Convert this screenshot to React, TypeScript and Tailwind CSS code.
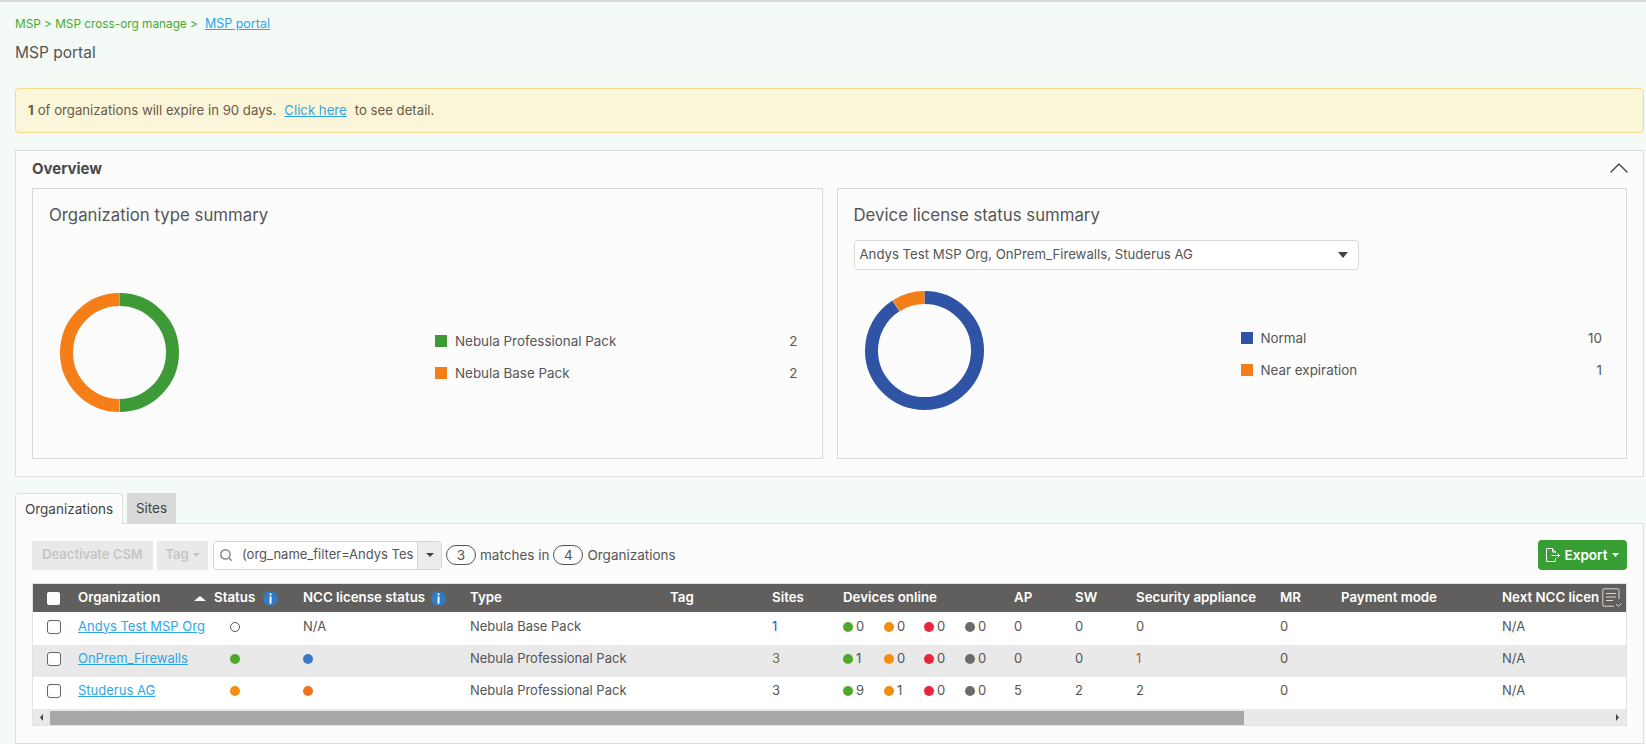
import React from 'react';
import { Search, ChevronUp } from 'lucide-react';

const COLS = 'grid grid-cols-[45px_136px_89px_167px_200px_102px_71px_171px_61px_61px_144px_61px_161px_125px]';

const green = '#4fa82e';
const amber = '#f28f12';
const red = '#e8253c';
const gray = '#6b6b6b';

const rows = [
    { name: 'Andys Test MSP Org', status: 'empty', ncc: '', type: 'Nebula Base Pack', sites: '1', sitesColor: 'text-[#2a5ea8]', dev: ['0', '0', '0', '0'], ap: '0', sw: '0', sec: '0', secOrange: false },
    { name: 'OnPrem_Firewalls', status: green, ncc: '#3a78c2', type: 'Nebula Professional Pack', sites: '3', sitesColor: 'text-[#7a6a4a]', dev: ['1', '0', '0', '0'], ap: '0', sw: '0', sec: '1', secOrange: true },
    { name: 'Studerus AG', status: amber, ncc: '#f0741f', type: 'Nebula Professional Pack', sites: '3', sitesColor: 'text-[#555]', dev: ['9', '1', '0', '0'], ap: '5', sw: '2', sec: '2', secOrange: false },
];

function Caret({ className }: { className?: string }) {
    return (
        <svg viewBox="0 0 8 5" className={className} fill="currentColor" preserveAspectRatio="none">
            <path d="M0 0h8L4 5z" />
        </svg>
    );
}

function Info() {
    return (
        <svg viewBox="0 0 15 15" className="h-[15px] w-[15px] shrink-0">
            <circle cx="7.5" cy="7.5" r="7.5" fill="#2f7cc4" />
            <rect x="6.6" y="2.4" width="1.9" height="1.9" fill="#fff" />
            <rect x="6.6" y="5.4" width="1.9" height="7.2" fill="#fff" />
        </svg>
    );
}

function Dot({ color }: { color: string }) {
    return <span className="h-2.5 w-2.5 shrink-0 rounded-full" style={{ backgroundColor: color }} />;
}

function Donut({ segments }: { segments: { color: string; value: number }[] }) {
    const r = 53;
    const c = 2 * Math.PI * r;
    const total = segments.reduce((a, s) => a + s.value, 0);
    let offset = 0;
    return (
        <svg viewBox="0 0 119 119" className="h-[119px] w-[119px] -rotate-90">
            {segments.map((s) => {
                const len = (s.value / total) * c;
                const el = (
                    <circle
                        key={s.color}
                        cx="59.5"
                        cy="59.5"
                        r={r}
                        fill="none"
                        stroke={s.color}
                        strokeWidth="13"
                        strokeDasharray={`${len - 0.4} ${c - len + 0.4}`}
                        strokeDashoffset={-offset}
                    />
                );
                offset += len;
                return el;
            })}
        </svg>
    );
}

function Legend({ color, label, value }: { color: string; label: string; value: string }) {
    return (
        <div className="flex h-[32px] items-center text-[13.4px] text-[#555]">
            <span className="mr-2 h-3 w-3" style={{ backgroundColor: color }} />
            <span className="flex-1">{label}</span>
            <span>{value}</span>
        </div>
    );
}

export default function App() {
    return (
        <div className="h-[744px] w-[1646px] overflow-hidden border-t-2 border-[#d8d8d8] bg-[#f4faf6] pl-[15px] pr-[2px] font-['Inter',sans-serif] text-[#555]">
            <div className="flex h-[41px] items-end pb-[11px] text-[11.8px] leading-4">
                <span className="text-[#45ab2e]">MSP &gt; MSP cross-org manage &gt;</span>
                <a className="ml-[7px] text-[12.5px] text-[#2ea6e8] underline">MSP portal</a>
            </div>
            <h1 className="text-[15.5px] leading-5 text-[#555]">MSP portal</h1>

            <div className="mt-[25px] flex h-[45px] items-center rounded-sm border border-[#f3dc8d] bg-[#fbf6d9] pl-3 text-[13.2px] text-[#6b5a46]">
                <b className="font-bold">1</b>
                <span className="ml-1">of organizations will expire in 90 days.</span>
                <a className="ml-2 text-[#2ea6e8] underline">Click here</a>
                <span className="ml-2">to see detail.</span>
            </div>

            <section className="mt-[17px] h-[327px] border border-[#dedede] bg-[#fcfcfc] px-4">
                <div className="flex h-[37px] items-center justify-between">
                    <h2 className="text-[15px] font-bold text-[#4a4a4a]">Overview</h2>
                    <ChevronUp className="-mr-2 -mt-1 h-8 w-8 text-[#444]" strokeWidth={1} />
                </div>
                <div className="flex gap-[14px]">
                    <div className="h-[271px] w-[791px] border border-[#d9d9d9] px-4">
                        <h3 className="mt-[16px] text-[16.8px] leading-5 text-[#555]">Organization type summary</h3>
                        <div className="mt-[68px] flex items-center">
                            <div className="ml-[11px]">
                                <Donut segments={[{ color: '#3d9a36', value: 2 }, { color: '#f47e17', value: 2 }]} />
                            </div>
                            <div className="ml-[256px] mt-[9px] flex-1 pr-[8px]">
                                <Legend color="#3d9a36" label="Nebula Professional Pack" value="2" />
                                <Legend color="#f47e17" label="Nebula Base Pack" value="2" />
                            </div>
                        </div>
                    </div>
                    <div className="h-[271px] w-[791px] border border-[#d9d9d9] px-4">
                        <h3 className="mt-[16px] text-[16.8px] leading-5 text-[#555]">Device license status summary</h3>
                        <div className="mt-[15px] flex h-[30px] w-[505px] items-center justify-between rounded-sm border border-[#d9d9d9] bg-white pl-[5px] pr-[10px] text-[13.2px]">
                            <span>Andys Test MSP Org, OnPrem_Firewalls, Studerus AG</span>
                            <Caret className="h-[6px] w-[10px] text-[#444]" />
                        </div>
                        <div className="mt-[21px] flex items-center">
                            <div className="ml-[11px]">
                                <Donut segments={[{ color: '#2f53a5', value: 10 }, { color: '#f47e17', value: 1 }]} />
                            </div>
                            <div className="ml-[257px] mt-[7px] flex-1 pr-[8px]">
                                <Legend color="#2f53a5" label="Normal" value="10" />
                                <Legend color="#f47e17" label="Near expiration" value="1" />
                            </div>
                        </div>
                    </div>
                </div>
            </section>

            <div className="mt-[16px] flex h-[30px] items-end gap-1">
                <div className="relative z-10 mb-[-1px] flex h-[31px] w-[108px] items-center justify-center rounded-t-sm border border-b-0 border-[#dedede] bg-[#fcfcfc] text-[13.5px] text-[#444]">
                    Organizations
                </div>
                <div className="mb-[-1px] flex h-[31px] w-[49px] items-center justify-center bg-[#d9d9d9] text-[13.5px] text-[#444]">
                    Sites
                </div>
            </div>
            <section className="h-[221px] border border-[#dedede] bg-[#fcfcfc] px-4 pt-[16px]">
                <div className="flex h-[30px] items-center">
                    <button className="h-[29px] w-[121px] bg-[#e9e9e9] text-[13px] font-semibold text-[#c6c6c6]">Deactivate CSM</button>
                    <button className="ml-[4px] flex h-[29px] w-[51px] items-center justify-center gap-1 bg-[#e9e9e9] text-[13px] font-semibold text-[#c6c6c6]">
                        Tag <Caret className="h-[4px] w-[7px]" />
                    </button>
                    <div className="ml-[5px] flex h-[29px] w-[229px] items-center rounded-sm border border-[#d4d4d4] bg-white">
                        <Search className="ml-[5px] h-[14px] w-[14px] shrink-0 text-[#888]" strokeWidth={2.5} />
                        <span className="ml-[9px] w-[171px] whitespace-nowrap text-[13px]">(org_name_filter=Andys Tes</span>
                        <span className="ml-auto flex h-full w-[24px] items-center justify-center border-l border-[#d4d4d4] bg-[#ececec]">
                            <Caret className="h-[4px] w-[8px] text-[#444]" />
                        </span>
                    </div>
                    <span className="ml-[4px] flex h-5 w-[30px] items-center justify-center rounded-full border border-[#555] text-[13.5px]">3</span>
                    <span className="ml-[4px] text-[13.5px]">matches in</span>
                    <span className="ml-[4px] flex h-5 w-[30px] items-center justify-center rounded-full border border-[#555] text-[13.5px]">4</span>
                    <span className="ml-[4px] text-[13.5px]">Organizations</span>
                    <button className="ml-auto flex h-[30px] w-[89px] items-center justify-center gap-[5px] rounded-sm bg-[#379e34] text-[13.5px] font-semibold text-white">
                        <svg viewBox="0 0 14 14" className="h-[14px] w-[14px]" fill="none" stroke="currentColor" strokeWidth="1">
                            <path d="M9.5 5V4L6.5.5H1a.5.5 0 0 0-.5.5v12a.5.5 0 0 0 .5.5h8a.5.5 0 0 0 .5-.5v-2.5M6.5.5V4h3M5.5 7.5h8m-2-2 2 2-2 2" />
                        </svg>
                        Export
                        <Caret className="h-[4px] w-[7px]" />
                    </button>
                </div>

                <div className="mt-[13px] border border-[#e2e2e2]">
                    <div className={`${COLS} relative h-[28px] items-center bg-[#615f5d] text-[13.3px] font-semibold text-white`}>
                        <span className="ml-[14px] h-[13px] w-[13px] rounded-[2px] bg-white" />
                        <span className="flex items-center justify-between pr-[8px]">
                            Organization
                            <Caret className="h-[5px] w-[12px] rotate-180" />
                        </span>
                        <span className="flex items-center gap-[8px]">Status <Info /></span>
                        <span className="flex items-center gap-[6px]">NCC license status <Info /></span>
                        <span>Type</span>
                        <span>Tag</span>
                        <span>Sites</span>
                        <span>Devices online</span>
                        <span>AP</span>
                        <span>SW</span>
                        <span>Security appliance</span>
                        <span>MR</span>
                        <span>Payment mode</span>
                        <span className="whitespace-nowrap">Next NCC licen</span>
                        <svg viewBox="0 0 20 20" className="absolute right-[4px] top-[4px] h-[20px] w-[20px]" fill="none" stroke="#d8d8d8" strokeWidth="1">
                            <path d="M17 11V2a1.2 1.2 0 0 0-1.2-1.2H2A1.2 1.2 0 0 0 .8 2v15A1.2 1.2 0 0 0 2 18.2h10M4 5.5h10M4 9h10M4 12.5h7M14 16l2.4 2.4 3-3" />
                        </svg>
                    </div>
                    {rows.map((r, i) => (
                        <div key={r.name} className={`${COLS} items-center pb-[4px] text-[13px] ${i === 0 ? 'h-[33px]' : 'h-[32px]'} ${i === 1 ? 'bg-[#e9e9e9]' : 'bg-white'}`}>
                            <span className="ml-[14px] h-[14px] w-[14px] rounded-[3px] border border-[#666] bg-white" />
                            <a className="overflow-hidden whitespace-nowrap text-[#2ea6e8] underline">{r.name}</a>
                            <span className="pl-[16px]">
                                {r.status === 'empty' ? (
                                    <span className="block h-2.5 w-2.5 rounded-full border border-[#555]" />
                                ) : (
                                    <span className="block h-2.5 w-2.5 rounded-full" style={{ backgroundColor: r.status }} />
                                )}
                            </span>
                            <span>
                                {r.ncc ? <span className="block h-2.5 w-2.5 rounded-full" style={{ backgroundColor: r.ncc }} /> : 'N/A'}
                            </span>
                            <span>{r.type}</span>
                            <span />
                            <span className={r.sitesColor}>{r.sites}</span>
                            <span className="grid grid-cols-[41px_40px_41px_41px]">
                                {[green, amber, red, gray].map((c, j) => (
                                    <span key={c} className="flex items-center gap-[3px]">
                                        <Dot color={c} />
                                        {r.dev[j]}
                                    </span>
                                ))}
                            </span>
                            <span>{r.ap}</span>
                            <span>{r.sw}</span>
                            <span className={r.secOrange ? 'text-[#a8642a]' : ''}>{r.sec}</span>
                            <span>0</span>
                            <span />
                            <span>N/A</span>
                        </div>
                    ))}
                    <div className="flex h-[16px] items-center bg-[#e9e9e9] pt-[1px]">
                        <span className="flex w-[17px] justify-center">
                            <Caret className="h-[3px] w-[7px] rotate-90 text-[#444]" />
                        </span>
                        <span className="h-[14px] w-[1194px] bg-[#a9a8a7]" />
                        <span className="ml-auto flex w-[17px] justify-center">
                            <Caret className="h-[3px] w-[7px] -rotate-90 text-[#444]" />
                        </span>
                    </div>
                </div>
            </section>
        </div>
    );
}
